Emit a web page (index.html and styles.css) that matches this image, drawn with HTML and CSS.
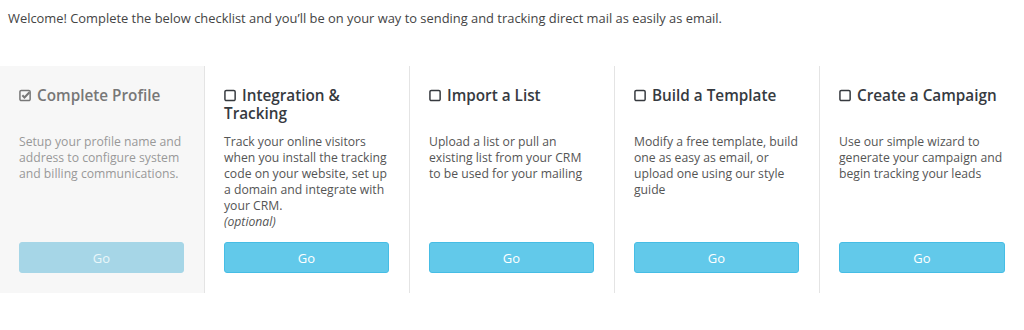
FILE: index.html
```html
<!DOCTYPE html>
<html>
<head>
<meta charset="utf-8">
<link rel="stylesheet" href="styles.css">
</head>
<body>
<p class="welcome">Welcome! Complete the below checklist and you’ll be on your way to sending and tracking direct mail as easily as email.</p>
<div class="steps">
  <div class="step done">
    <h3 class="title"><svg class="box" viewBox="0 0 14 14"><path d="M2.5 1.5h8a1.5 1.5 0 0 1 1.5 1.5v8a1.5 1.5 0 0 1-1.5 1.5h-8A1.5 1.5 0 0 1 1 11V3a1.5 1.5 0 0 1 1.5-1.5z" fill="none" stroke="currentColor" stroke-width="1.6"/><path d="M3.6 6.8l2.3 2.3 5.4-5.6" fill="none" stroke="currentColor" stroke-width="2.2"/></svg>Complete Profile</h3>
    <p class="desc">Setup your profile name and address to configure system and billing communications.</p>
    <button class="go" disabled>Go</button>
  </div>
  <div class="step">
    <h3 class="title"><svg class="box" viewBox="0 0 14 14"><path d="M2.5 1.5h8a1.5 1.5 0 0 1 1.5 1.5v8a1.5 1.5 0 0 1-1.5 1.5h-8A1.5 1.5 0 0 1 1 11V3a1.5 1.5 0 0 1 1.5-1.5z" fill="none" stroke="currentColor" stroke-width="1.6"/></svg>Integration &amp; Tracking</h3>
    <p class="desc">Track your online visitors when you install the tracking code on your website, set up a domain and integrate with your CRM.<br><em>(optional)</em></p>
    <button class="go">Go</button>
  </div>
  <div class="step">
    <h3 class="title"><svg class="box" viewBox="0 0 14 14"><path d="M2.5 1.5h8a1.5 1.5 0 0 1 1.5 1.5v8a1.5 1.5 0 0 1-1.5 1.5h-8A1.5 1.5 0 0 1 1 11V3a1.5 1.5 0 0 1 1.5-1.5z" fill="none" stroke="currentColor" stroke-width="1.6"/></svg>Import a List</h3>
    <p class="desc">Upload a list or pull an existing list from your CRM<br>to be used for your mailing</p>
    <button class="go">Go</button>
  </div>
  <div class="step">
    <h3 class="title"><svg class="box" viewBox="0 0 14 14"><path d="M2.5 1.5h8a1.5 1.5 0 0 1 1.5 1.5v8a1.5 1.5 0 0 1-1.5 1.5h-8A1.5 1.5 0 0 1 1 11V3a1.5 1.5 0 0 1 1.5-1.5z" fill="none" stroke="currentColor" stroke-width="1.6"/></svg>Build a Template</h3>
    <p class="desc">Modify a free template, build one as easy as email, or upload one using our style guide</p>
    <button class="go">Go</button>
  </div>
  <div class="step">
    <h3 class="title"><svg class="box" viewBox="0 0 14 14"><path d="M2.5 1.5h8a1.5 1.5 0 0 1 1.5 1.5v8a1.5 1.5 0 0 1-1.5 1.5h-8A1.5 1.5 0 0 1 1 11V3a1.5 1.5 0 0 1 1.5-1.5z" fill="none" stroke="currentColor" stroke-width="1.6"/></svg>Create a Campaign</h3>
    <p class="desc">Use our simple wizard to generate your campaign and begin tracking your leads</p>
    <button class="go">Go</button>
  </div>
</div>
</body>
</html>
```
FILE: styles.css
```css
html, body {
  margin: 0;
  padding: 0;
  background: #fff;
  font-family: "Open Sans", "Noto Sans", sans-serif;
  color: #555;
  overflow: hidden;
}
.welcome {
  margin: 0;
  padding: 10px 8px 0;
  font-size: 12.9px;
  line-height: 17px;
  color: #444;
}
.steps {
  display: grid;
  grid-template-columns: repeat(5, 205px);
  margin-top: 39px;
  height: 227px;
}
.step {
  display: flex;
  flex-direction: column;
  padding: 20px 20px 20px 19px;
  border-right: 1px solid #e4e4e4;
}
.step:last-child {
  border-right: none;
}
.step.done {
  background: #f7f7f7;
}
.title {
  margin: 0;
  font-size: 15.3px;
  font-weight: 600;
  line-height: 18px;
  color: #363a3f;
  height: 44px;
}
.done .title {
  color: #777;
}
.box {
  width: 13px;
  height: 13px;
  vertical-align: -1px;
  margin-right: 5px;
}
.desc {
  margin: 4px -3px 0 0;
  font-size: 12.2px;
  line-height: 16px;
  color: #555;
}
.done .desc {
  color: #999;
}
.desc em {
  font-style: italic;
}
.go {
  margin-top: auto;
  width: 100%;
  height: 31px;
  border: 1px solid #46bde5;
  border-radius: 3px;
  background: #62c9ea;
  color: #fff;
  font-family: inherit;
  font-size: 13px;
}
.go:disabled {
  background: #a6d6e7;
  border-color: #a6d6e7;
  opacity: 1;
  color: #eaf6fa;
}
```
